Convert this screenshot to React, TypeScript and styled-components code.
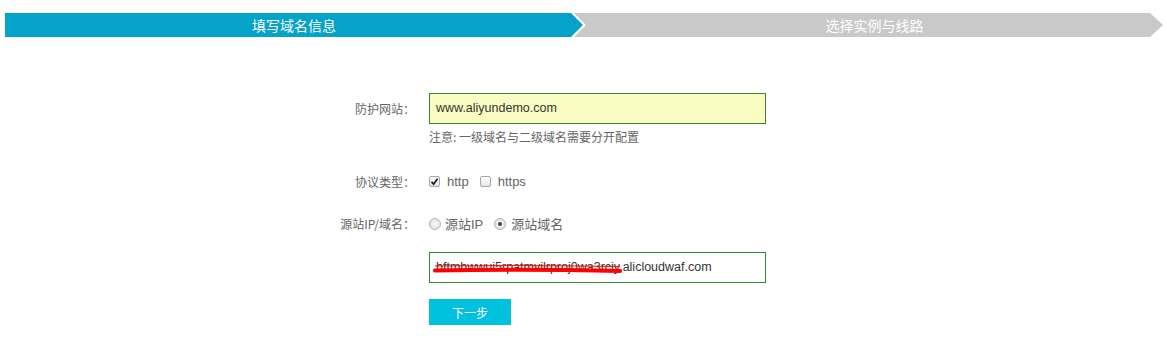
import styled, { createGlobalStyle } from "styled-components";

const Global = createGlobalStyle`
    body {
        margin: 0;
        background: #fff;
        font-family: "Liberation Sans", "Noto Sans CJK SC", sans-serif;
        font-size: 12px;
        color: #666;
    }
`

const Steps = styled.div`
    display: flex;
    padding: 13px 0 0 5px;
    height: 24px;
`

const Step = styled.div<{ $active?: boolean; $first?: boolean }>`
    height: 24px;
    line-height: 24px;
    width: ${p => p.$first ? '578px' : '589px'};
    margin-left: ${p => p.$first ? '0' : '-9px'};
    background: ${p => p.$active ? '#05a3c9' : '#c9c9c9'};
    color: #fff;
    font-size: 14px;
    font-family: "Noto Sans CJK SC", sans-serif;
    text-align: center;
    padding-left: ${p => p.$first ? '0' : '12px'};
    box-sizing: border-box;
    clip-path: ${p => p.$first
        ? 'polygon(0 0, calc(100% - 12px) 0, 100% 50%, calc(100% - 12px) 100%, 0 100%)'
        : 'polygon(0 0, calc(100% - 13px) 0, 100% 50%, calc(100% - 13px) 100%, 0 100%, 12px 50%)'};
`

const Form = styled.div`
    display: flex;
    flex-direction: column;
    margin-top: 56px;
    padding-left: 314px;
`

const Row = styled.div<{ $mt?: number }>`
    display: flex;
    align-items: flex-start;
    margin-top: ${p => p.$mt || 0}px;
`

const Label = styled.div`
    width: 101px;
    flex-shrink: 0;
    text-align: right;
    font-family: "Noto Sans CJK SC", sans-serif;
    font-size: 12px;
    line-height: 31px;
    color: #666;
    margin-right: 14px;
`

const Field = styled.div`
    display: flex;
    flex-direction: column;
`

const Input = styled.div<{ $yellow?: boolean }>`
    position: relative;
    width: 337px;
    height: 31px;
    box-sizing: border-box;
    border: 1px solid #2e8b2e;
    background: ${p => p.$yellow ? '#fafdc1' : '#fff'};
    padding: 0 6px;
    line-height: 29px;
    font-size: 12.5px;
    color: #333;
    overflow: hidden;
    white-space: nowrap;
`

const Note = styled.div`
    font-family: "Noto Sans CJK SC", sans-serif;
    font-size: 12px;
    color: #666;
    margin-top: 4px;
`

const Options = styled.div`
    display: flex;
    align-items: center;
    height: 31px;
    gap: 11px;
`

const Option = styled.label<{ $gap?: number }>`
    display: flex;
    align-items: center;
    gap: ${p => p.$gap || 7}px;
    font-size: 13px;
    color: #666;
    font-family: "Liberation Sans", "Noto Sans CJK SC", sans-serif;
`

const Box = styled.span`
    width: 11px;
    height: 11px;
    box-sizing: border-box;
    border: 1px solid #a8a8a8;
    border-radius: 2px;
    background: linear-gradient(#fff, #e6e6e6);
    display: flex;
    align-items: center;
    justify-content: center;
`

const Radio = styled.span<{ $checked?: boolean }>`
    width: 12px;
    height: 12px;
    box-sizing: border-box;
    border: 1px solid #b4b4b4;
    border-radius: 50%;
    background: radial-gradient(circle, #f6f6f6, #dcdcdc);
    display: flex;
    align-items: center;
    justify-content: center;
    &::after {
        content: "";
        display: ${p => p.$checked ? 'block' : 'none'};
        width: 4px;
        height: 4px;
        border-radius: 50%;
        background: #444;
    }
`

const Scribble = styled.svg`
    position: absolute;
    left: 0;
    top: 0;
    pointer-events: none;
`

const Button = styled.button`
    width: 82px;
    height: 26px;
    border: none;
    background: #00c1de;
    color: #fff;
    font-family: "Noto Sans CJK SC", sans-serif;
    font-size: 12px;
    padding: 0;
    cursor: pointer;
`

export default function App() {
    return (
        <>
            <Global />
            <Steps>
                <Step $first $active>填写域名信息</Step>
                <Step>选择实例与线路</Step>
            </Steps>
            <Form>
                <Row>
                    <Label>防护网站：</Label>
                    <Field>
                        <Input $yellow>www.aliyundemo.com</Input>
                        <Note>注意: 一级域名与二级域名需要分开配置</Note>
                    </Field>
                </Row>
                <Row $mt={21}>
                    <Label>协议类型：</Label>
                    <Options>
                        <Option>
                            <Box>
                                <svg width="9" height="9" viewBox="0 0 9 9">
                                    <path d="M1.5 4.8 L3.6 7 L7.6 1.8" fill="none" stroke="#222" strokeWidth="1.8" />
                                </svg>
                            </Box>
                            http
                        </Option>
                        <Option>
                            <Box />
                            https
                        </Option>
                    </Options>
                </Row>
                <Row $mt={11}>
                    <Label>源站IP/域名：</Label>
                    <Options>
                        <Option $gap={4}><Radio />源站IP</Option>
                        <Option $gap={5}><Radio $checked />源站域名</Option>
                    </Options>
                </Row>
                <Row $mt={13}>
                    <Label />
                    <Field>
                        <Input>
                            bftmhwwui5rpatmvilrproj0wa3rciy.alicloudwaf.com
                            <Scribble width="337" height="31">
                                <path d="M5 17.5 Q100 16 190 18" fill="none" stroke="#f00" strokeWidth="4" strokeLinecap="round" />
                                <path d="M5 13 Q90 12 190 13.5" fill="none" stroke="#f00" strokeWidth="1" />
                            </Scribble>
                        </Input>
                        <Row $mt={16}>
                            <Button>下一步</Button>
                        </Row>
                    </Field>
                </Row>
            </Form>
        </>
    )
}
